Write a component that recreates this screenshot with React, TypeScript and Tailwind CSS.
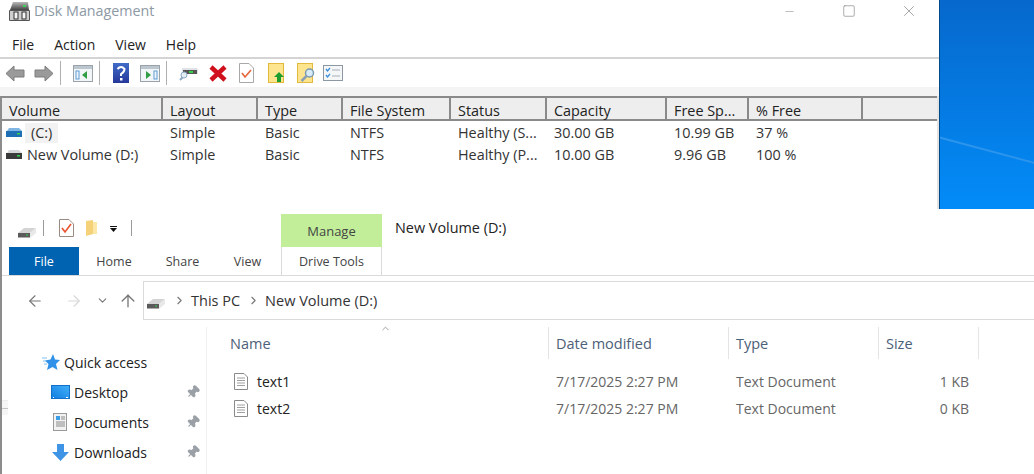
import { ArrowLeft, ArrowRight, ArrowUp, ChevronDown, ChevronRight, Minus, Pin, Square, X } from 'lucide-react';

const font = 'font-["Open_Sans","Noto_Sans",sans-serif]';

function Disk({ body = '#d4d6d8', strip = '#3a3a3a', className = '' }: { body?: string; strip?: string; className?: string }) {
  return (
    <svg width="18" height="12" viewBox="0 0 18 12" className={className}>
      <path d="M2 4 L4 1 H14 L17 4 Z" fill={body} />
      <rect x="1" y="4" width="16" height="6" fill={strip} />
      <rect x="12" y="6" width="3" height="1.5" fill="#35d04a" />
    </svg>
  );
}

function SlantDisk({ className = '' }: { className?: string }) {
  return (
    <svg width="18" height="10" viewBox="0 0 18 10" className={className}>
      <path d="M0 5 L6 0 H18 L12 5 Z" fill="#d4d4d4" />
      <path d="M12 5 L18 0 V5 L12 10 Z" fill="#e8e8e8" />
      <rect x="0" y="5" width="12" height="4.5" fill="#5a5a5a" />
      <rect x="8" y="6.5" width="2" height="1" fill="#35d04a" />
    </svg>
  );
}

function GrayArrow({ flip = false }: { flip?: boolean }) {
  return (
    <svg width="20" height="17" viewBox="0 0 20 17" className={flip ? '-scale-x-100' : ''}>
      <path d="M1 8.5 L9 1 V5 H19 V12 H9 V16 Z" fill="#9a9a9a" stroke="#7d7d7d" />
    </svg>
  );
}

function PaneIcon({ right = false }: { right?: boolean }) {
  return (
    <svg width="20" height="17" viewBox="0 0 20 17">
      <rect x="0.5" y="0.5" width="19" height="16" fill="#f3f6f8" stroke="#9aa3aa" />
      <rect x="1" y="1" width="18" height="3" fill="#bcc6cf" />
      <rect x={right ? 14 : 3} y="6" width="3" height="8" fill="none" stroke="#5a9bd8" />
      <path d={right ? 'M6 6 L11 10 L6 14 Z' : 'M14 6 L9 10 L14 14 Z'} fill="#2f9e44" />
    </svg>
  );
}

function Toolbar() {
  return (
    <div className="flex h-[28px] items-center">
      <div className="ml-[5px] flex w-[55px] gap-[9px]">
        <GrayArrow />
        <GrayArrow flip />
      </div>
      <div className="h-[24px] w-px bg-[#b0b0b0]" />
      <div className="ml-[12px]"><PaneIcon /></div>
      <div className="ml-[6px] h-[24px] w-px bg-[#b0b0b0]" />
      <svg width="16" height="20" viewBox="0 0 16 20" className="ml-[13px]">
        <defs>
          <linearGradient id="help" x1="0" y1="0" x2="0" y2="1">
            <stop offset="0" stopColor="#3f6cc8" />
            <stop offset="1" stopColor="#26389a" />
          </linearGradient>
        </defs>
        <rect width="16" height="20" fill="url(#help)" />
        <path d="M4.5 6 Q8 2 11.5 6 Q11.5 9 8 11 V13" fill="none" stroke="#fff" strokeWidth="2" />
        <rect x="7" y="15" width="2.5" height="2.5" fill="#fff" />
      </svg>
      <div className="ml-[11px]"><PaneIcon right /></div>
      <div className="ml-[6px] h-[24px] w-px bg-[#b0b0b0]" />
      <svg width="19" height="16" viewBox="0 0 19 16" className="ml-[12px]">
        <path d="M3 3 H18 L19 5 V9 H3 Z" fill="#dfe3e6" />
        <rect x="4" y="5" width="14" height="4" fill="#555" />
        <rect x="10" y="6" width="4" height="2" fill="#35d04a" />
        <circle cx="5" cy="10" r="3" fill="#e2edf4" stroke="#8aa8c0" />
        <path d="M1 15 L3.5 12.5" stroke="#8aa8c0" strokeWidth="2" />
      </svg>
      <svg width="18" height="17" viewBox="0 0 18 17" className="ml-[11px]">
        <path d="M2 2 L16 15 M16 2 L2 15" stroke="#d0101c" strokeWidth="4.5" />
      </svg>
      <svg width="15" height="20" viewBox="0 0 15 20" className="ml-[12px]">
        <path d="M0.5 0.5 H10 L14.5 5 V19.5 H0.5 Z" fill="#fff" stroke="#a8a8a8" />
        <path d="M3 10 L6 14 L12 7" fill="none" stroke="#e8663a" strokeWidth="1.6" />
      </svg>
      <svg width="17" height="20" viewBox="0 0 17 20" className="ml-[14px]">
        <rect x="0.5" y="0.5" width="15" height="19" fill="#fce58e" stroke="#e2b93c" />
        <path d="M11 9 L16 14 H13 V19 H9 V14 H6 Z" fill="#1e9e2e" />
      </svg>
      <svg width="18" height="20" viewBox="0 0 18 20" className="ml-[12px]">
        <rect x="0.5" y="0.5" width="15" height="19" fill="#fce58e" stroke="#e2b93c" />
        <circle cx="12.5" cy="10" r="4" fill="#d8ecf8" stroke="#7c9ab0" strokeWidth="1.5" />
        <path d="M9.5 13 L4.5 18" stroke="#8aa0b0" strokeWidth="2.5" />
      </svg>
      <svg width="20" height="16" viewBox="0 0 20 16" className="ml-[8px]">
        <rect x="0.5" y="0.5" width="19" height="15" fill="#f4f6f8" stroke="#8c98a4" />
        <path d="M3 4 L4.5 6 L7 3 M3 10 L4.5 12 L7 9" fill="none" stroke="#3a8fdc" strokeWidth="1.3" />
        <path d="M9 5 H17 M9 11 H17" stroke="#a8b0b8" />
      </svg>
    </div>
  );
}

const volCols = [
  { w: 'w-[161px]', label: 'Volume' },
  { w: 'w-[95px]', label: 'Layout' },
  { w: 'w-[85px]', label: 'Type' },
  { w: 'w-[108px]', label: 'File System' },
  { w: 'w-[96px]', label: 'Status' },
  { w: 'w-[120px]', label: 'Capacity' },
  { w: 'w-[82px]', label: 'Free Sp...' },
  { w: 'w-[114px]', label: '% Free' },
  { w: 'flex-1', label: '' },
];

const volumes = [
  ['Simple', 'Basic', 'NTFS', 'Healthy (S...', '30.00 GB', '10.99 GB', '37 %'],
  ['Simple', 'Basic', 'NTFS', 'Healthy (P...', '10.00 GB', '9.96 GB', '100 %'],
];

function VolumeTable() {
  return (
    <div className="flex flex-1 flex-col border-r-2 border-l-2 border-[#e4e4e4] border-l-[#8c8c8c] text-[14.4px]">
      <div className="flex h-[25px] border-y-2 border-[#8a8a8a] bg-[#eeeeee]">
        {volCols.map((c, i) => (
          <div
            key={i}
            className={`${c.w} ${i < 8 ? 'border-r-2 border-[#8a8a8a]' : ''} pt-[4px] pl-[7px] leading-[18px] text-[#222]`}
          >
            {c.label}
          </div>
        ))}
      </div>
      <div className="flex flex-col pt-px">
        {volumes.map((row, r) => (
          <div key={r} className="flex h-[22px] items-center text-[#333]">
            <div className="flex w-[161px] items-center pl-[3px]">
              {r === 0 ? (
                <>
                  <Disk body="#7fb6e6" strip="#1f6fb4" />
                  <span className="ml-[2px] bg-[#f2f2f2] px-[6px] leading-[20px]">(C:)</span>
                </>
              ) : (
                <>
                  <Disk />
                  <span className="ml-[4px]">New Volume (D:)</span>
                </>
              )}
            </div>
            {row.map((cell, i) => (
              <div key={i} className={`${volCols[i + 1].w} pl-[7px] whitespace-nowrap`}>{cell}</div>
            ))}
          </div>
        ))}
      </div>
    </div>
  );
}

function DiskManagement() {
  return (
    <div className="flex h-[209px] flex-col bg-white text-[14px]">
      <div className="flex h-[34px] items-start">
        <svg width="21" height="19" viewBox="0 0 21 19" className="mt-[2px] ml-[9px]">
          <defs>
            <linearGradient id="drive" x1="0" y1="0" x2="0" y2="1">
              <stop offset="0" stopColor="#b8b8b8" />
              <stop offset="1" stopColor="#444" />
            </linearGradient>
          </defs>
          <path d="M4 0 H19 L20 8 H1 Z" fill="url(#drive)" />
          <rect x="14" y="3" width="3" height="2" fill="#3fd05a" />
          <rect x="0" y="8" width="21" height="11" rx="1" fill="#555" />
          <rect x="1" y="9" width="19" height="9" fill="#cfcfcf" />
          <rect x="5" y="10" width="4" height="7" fill="#f4f4f4" stroke="#333" />
          <rect x="13" y="10" width="4" height="7" fill="#f4f4f4" stroke="#333" />
        </svg>
        <span className="mt-px ml-[4px] text-[14.3px] leading-[20px] text-[#8d99a5]">Disk Management</span>
        <div className="ml-auto flex items-center pt-[2px] text-[#8a8a8a]">
          <Minus size={13} strokeWidth={1} className="mr-[46px]" />
          <Square size={14} strokeWidth={1.2} className="mr-[44px]" />
          <X size={18} strokeWidth={1} className="mr-[21px]" />
        </div>
      </div>
      <div className="flex h-[25px] items-center gap-[20px] border-b-2 border-[#d4d4d4] pb-[2px] pl-[12px] text-[#222]">
        <span>File</span>
        <span>Action</span>
        <span>View</span>
        <span>Help</span>
      </div>
      <Toolbar />
      <div className="h-[9px] bg-[#f4f4f4]" />
      <VolumeTable />
    </div>
  );
}

function Wallpaper() {
  return (
    <div className="relative h-[209px] w-[95px] overflow-hidden border-l border-[#004a8a] bg-gradient-to-b from-[#0668cc] to-[#038cf8]">
      <div className="absolute top-[150px] -left-[5px] h-[2px] w-[110px] rotate-[15deg] bg-[#2b94ec]" />
    </div>
  );
}

function QuickAccess() {
  return (
    <div className="flex h-[38px] items-start">
      <SlantDisk className="mt-[19px] ml-[16px]" />
      <div className="mt-[11px] ml-[7px] h-[16px] w-px bg-[#9a9a9a]" />
      <svg width="15" height="18" viewBox="0 0 15 18" className="mt-[10px] ml-[15px]">
        <path d="M0.5 0.5 H10 L14.5 5 V17.5 H0.5 Z" fill="#fff" stroke="#9a8a80" />
        <path d="M3 9 L6 13 L12 5" fill="none" stroke="#e8502a" strokeWidth="1.6" />
      </svg>
      <svg width="13" height="17" viewBox="0 0 13 17" className="mt-[11px] ml-[11px]">
        <path d="M1 1 L8 0 V14 L1 16 Z" fill="#f5d27a" />
        <path d="M8 2 H12 V14 H8 Z" fill="#fbe7a6" />
      </svg>
      <svg width="7" height="6" viewBox="0 0 7 6" className="mt-[17px] ml-[12px]">
        <rect width="7" height="1" fill="#111" />
        <path d="M0 2 H7 L3.5 6 Z" fill="#111" />
      </svg>
      <div className="mt-[11px] ml-[14px] h-[16px] w-px bg-[#9a9a9a]" />
      <div className="ml-[149px] flex h-[33px] w-[101px] items-end justify-center self-end bg-[#c2ee99] pb-[6px] text-[13px] text-[#444]">
        Manage
      </div>
      <span className="mt-[8px] ml-[13px] text-[14.4px] text-[#222]">New Volume (D:)</span>
    </div>
  );
}

function RibbonTabs() {
  return (
    <div className="flex h-[29px] items-stretch border-b border-[#dadada] text-[12.5px] text-[#444]">
      <div className="ml-[7px] flex w-[70px] items-center justify-center bg-[#0063b1] pt-[2px] text-white">File</div>
      <div className="flex w-[70px] items-center justify-center pt-[2px]">Home</div>
      <div className="flex w-[67px] items-center justify-center pt-[2px]">Share</div>
      <div className="flex w-[63px] items-center justify-center pt-[2px]">View</div>
      <div className="ml-[2px] flex w-[101px] items-center justify-center border-x border-[#dadada] pt-[2px]">Drive Tools</div>
    </div>
  );
}

function AddressBar() {
  return (
    <div className="flex h-[44px] items-end">
      <div className="flex h-[39px] w-[141px] items-center text-[#777]">
        <ArrowLeft size={18} strokeWidth={1.5} className="ml-[24px]" />
        <ArrowRight size={18} strokeWidth={1.5} className="ml-[21px] text-[#d8d8d8]" />
        <ChevronDown size={13} strokeWidth={2} className="ml-[13px]" />
        <ArrowUp size={20} strokeWidth={1.6} className="ml-[9px]" />
      </div>
      <div className="flex h-[39px] flex-1 items-center border border-r-0 border-[#dadada] text-[14.5px] text-[#333]">
        <SlantDisk className="mt-[6px] ml-[3px]" />
        <ChevronRight size={13} className="ml-[8px] text-[#777]" />
        <span className="ml-[5px]">This PC</span>
        <ChevronRight size={13} className="ml-[7px] text-[#777]" />
        <span className="ml-[5px]">New Volume (D:)</span>
      </div>
    </div>
  );
}

function NavIcon({ name }: { name: string }) {
  if (name === 'Desktop') {
    return (
      <svg width="19" height="14" viewBox="0 0 19 14">
        <defs>
          <linearGradient id="screen" x1="0" y1="1" x2="1" y2="0">
            <stop offset="0" stopColor="#0f7de0" />
            <stop offset="1" stopColor="#43b0fa" />
          </linearGradient>
        </defs>
        <rect x="0.5" y="0.5" width="18" height="13" fill="url(#screen)" stroke="#1270c8" />
        <path d="M2 12.5 H3 M15 12.5 H17" stroke="#fff" />
      </svg>
    );
  }
  if (name === 'Documents') {
    return (
      <svg width="15" height="18" viewBox="0 0 15 18">
        <rect x="0.5" y="0.5" width="13" height="17" fill="#f2f2f2" stroke="#999" />
        <rect x="3" y="3" width="4" height="4" fill="#3a9de8" />
        <path d="M8 4 H12 M8 6 H12 M3 9 H12 M3 11 H12 M3 13 H12" stroke="#8a8a8a" />
      </svg>
    );
  }
  return (
    <svg width="17" height="17" viewBox="0 0 17 17">
      <path d="M5 0 H12 V8 H17 L8.5 17 L0 8 H5 Z" fill="#3f94e6" />
    </svg>
  );
}

function Sidebar() {
  return (
    <div className="mt-[7px] flex w-[205px] flex-col border-r border-[#efefef] pt-[20px] text-[14px] text-[#222]">
      <div className="flex h-[30px] items-center pl-[40px]">
        <svg width="18" height="16" viewBox="0 0 18 16">
          <path d="M11 0 L13 5.5 L18 6 L14 10 L15.5 16 L10.5 13 L5 16 L6.5 10 L3 6.5 L8.5 5.5 Z" fill="#2f92e8" />
          <path d="M0 4 H5 M1 7 H4 M2 10 H5" stroke="#7fc0f0" />
        </svg>
        <span className="ml-[4px]">Quick access</span>
      </div>
      {['Desktop', 'Documents', 'Downloads'].map((name) => (
        <div key={name} className="flex h-[30px] items-center">
          <div className="flex w-[72px] justify-center pl-[44px]"><NavIcon name={name} /></div>
          <span>{name}</span>
          <Pin size={14} strokeWidth={2} className="mr-[6px] ml-auto rotate-45 fill-[#9aa0a6] text-[#9aa0a6]" />
        </div>
      ))}
    </div>
  );
}

const fileCols = [
  { w: 'w-[342px]', label: 'Name', pl: 'pl-[23px]' },
  { w: 'w-[180px]', label: 'Date modified', pl: 'pl-[7px]' },
  { w: 'w-[150px]', label: 'Type', pl: 'pl-[7px]' },
  { w: 'w-[100px]', label: 'Size', pl: 'pl-[7px]' },
];

function FileList() {
  return (
    <div className="relative mt-[7px] flex flex-1 flex-col text-[14px]">
      <ChevronDown size={11} className="absolute -top-[4px] left-[173px] rotate-180 text-[#999]" />
      <div className="flex h-[32px]">
        {fileCols.map((c) => (
          <div key={c.label} className={`${c.w} ${c.pl} flex items-center border-r border-[#e4e4e4] pt-[2px] text-[14.5px] text-[#4c6078]`}>
            {c.label}
          </div>
        ))}
      </div>
      <div className="mt-[9px] flex flex-col text-[#666]">
        {['text1', 'text2'].map((name, i) => (
          <div key={name} className="flex h-[27px] items-center">
            <div className="flex w-[342px] items-center pl-[27px] text-[#222]">
              <svg width="14" height="17" viewBox="0 0 14 17">
                <path d="M0.5 0.5 H10 L13.5 4 V16.5 H0.5 Z" fill="#fff" stroke="#8a8a8a" />
                <path d="M3 5 H11 M3 7.5 H11 M3 10 H11 M3 12.5 H11" stroke="#a0a0a0" />
              </svg>
              <span className="ml-[9px]">{name}</span>
            </div>
            <div className="w-[180px] pl-[7px]">7/17/2025 2:27 PM</div>
            <div className="w-[150px] pl-[7px]">Text Document</div>
            <div className="w-[90px] text-right">{i === 0 ? '1 KB' : '0 KB'}</div>
          </div>
        ))}
      </div>
    </div>
  );
}

function Explorer() {
  return (
    <div className="relative flex flex-1 flex-col overflow-hidden border-l-2 border-[#8c8c8c] bg-white">
      <QuickAccess />
      <RibbonTabs />
      <AddressBar />
      <div className="flex flex-1">
        <Sidebar />
        <FileList />
      </div>
      {/* leftover edge of the window behind */}
      <div className="absolute top-[191px] left-0 h-[15px] w-[6px] border-t border-[#eeeeee] bg-[#f6f6f6]">
        <div className="mt-[7px] h-px bg-[#c4c4c4]" />
      </div>
    </div>
  );
}

export default function App() {
  return (
    <div className={`${font} flex h-[474px] w-[1034px] flex-col overflow-hidden bg-white`}>
      <div className="flex">
        <div className="w-[939px]"><DiskManagement /></div>
        <Wallpaper />
      </div>
      <Explorer />
    </div>
  );
}
